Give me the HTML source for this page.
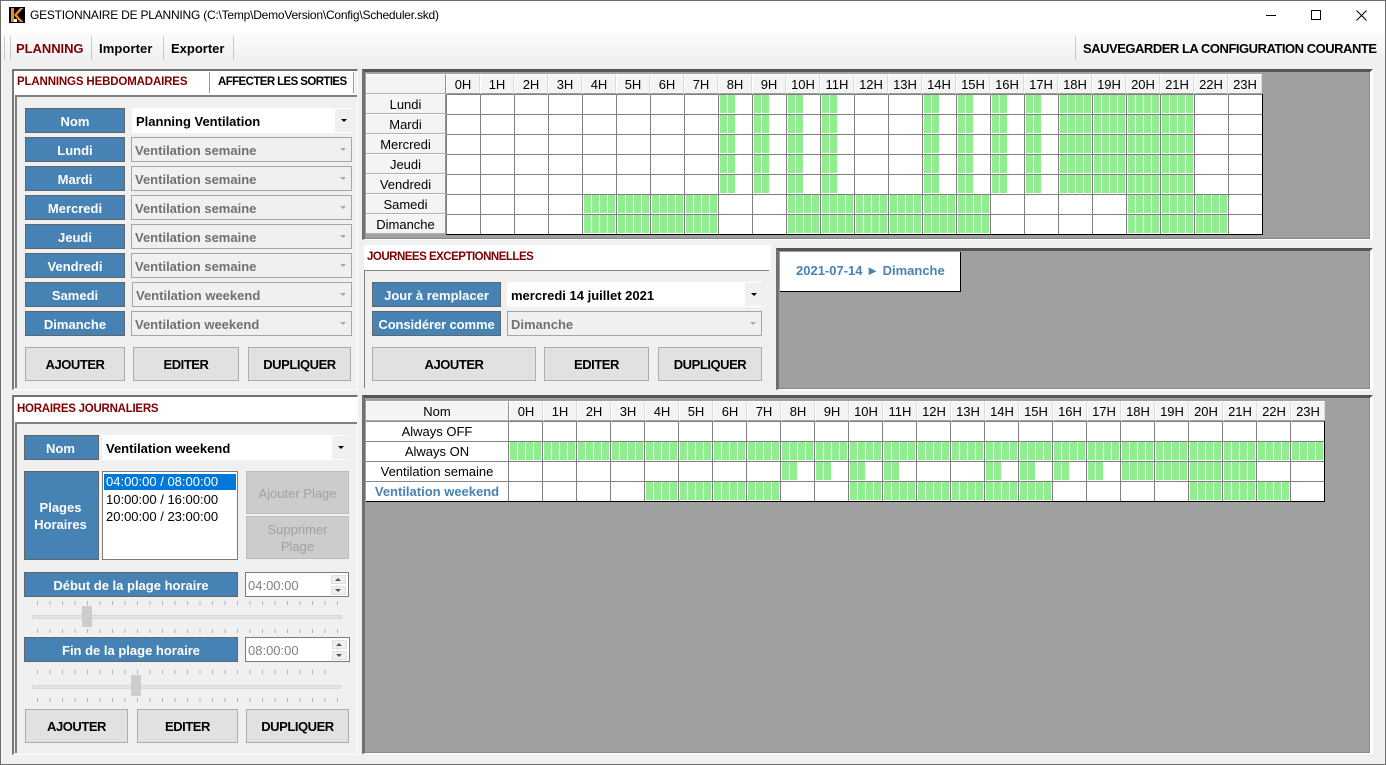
<!DOCTYPE html>
<html><head><meta charset="utf-8"><title>Planning</title>
<style>
html,body{margin:0;padding:0;background:#f0f0f0}
#w{position:relative;width:1386px;height:765px;overflow:hidden;background:#f0f0f0;font-family:"Liberation Sans",sans-serif;font-size:13px;color:#000}
#w div{position:absolute;box-sizing:border-box}
.lb{background:#4682b4;border:1px solid #5f666c;color:#fff;font-weight:bold;text-align:center;line-height:25px;left:25px;width:100px;height:25px;white-space:nowrap}
.cb{left:131px;width:221px;height:25px;background:#f0f0f0;border:1px solid #a6a6a6;color:#707070;font-weight:bold;line-height:25px;padding-left:3px}
.cb:after{content:"";position:absolute;right:5px;top:10px;border:3px solid transparent;border-top:3px solid #a8a8a8;border-bottom:0}
.ca{background:#fff;height:25px;font-weight:bold;line-height:27px;padding-left:4px;color:#000}
.ca i{position:absolute;right:0;top:1px;bottom:1px;width:17px;background:#f0f0f0}
.ca i:after{content:"";position:absolute;left:6px;top:10px;border:3px solid transparent;border-top:3px solid #000;border-bottom:0}
.bt{background:#e1e1e1;border:1px solid #adadad;font-weight:bold;font-size:13px;letter-spacing:-.45px;text-align:center;line-height:33px;height:34px;top:347px}
.hd{background:#fff}
.rd{color:#7f0000;font-weight:bold;font-size:11.5px}
.fr{background:#a0a0a0;border-top:3px solid #555;border-left:3px solid #707070;border-right:3px solid #fff;border-bottom:1px solid #fff;box-shadow:inset -1px -1px 0 #8a8a8a}
.hr{display:flex;height:20px;background:#f4f4f4}
.hr span{display:block;width:34px;border-left:1px solid #fff;border-right:1px solid #dcdcdc;border-top:1px solid #fff;border-bottom:1px solid #a0a0a0;text-align:center;line-height:19px;background:#f4f4f4;box-sizing:border-box;height:20px}
.rh{left:366px;width:80px;height:20px;background:#f4f4f4;border-top:1px solid #fff;border-bottom:1px solid #b0b0b0;border-right:1px solid #909090;text-align:center;line-height:19px}
.rn{left:366px;width:142px;height:20px;background:#fff;border-top:1px solid #888;text-align:center;line-height:19px}
.gd{background:#fff;overflow:hidden;border-right:1px solid #000;border-bottom:1px solid #000}
.g{background:linear-gradient(90deg,transparent 2px,#90ee90 2px,#90ee90 9px,transparent 9px,transparent 10px,#90ee90 10px,#90ee90 17px,transparent 17px,transparent 18px,#90ee90 18px,#90ee90 25px,transparent 25px,transparent 26px,#90ee90 26px,#90ee90 33px,transparent 33px) 0 0/34px 100%}
.ov{left:0;top:0;right:0;bottom:0;background:linear-gradient(90deg,#808080 1px,transparent 1px) 0 0/34px 100%,linear-gradient(180deg,#808080 1px,transparent 1px,transparent 19px,#fff 19px) 0 0/100% 20px}
.sep{width:1px;background:#c8c8c8;top:36px;height:24px}
.ds{background:#cccccc;border:1px solid #bdbdbd;color:#a2a2a2;text-align:center;left:246px;width:103px}
.tk{left:37px;width:301px;height:4px;background:linear-gradient(90deg,#b4b4b4 1px,transparent 1px) 0 0/12.5px 100%}
.tr{left:32px;height:4px;background:#e3e3e3;border:1px solid #d8d8d8}
.th{width:10px;height:21px;background:#cdcdcd}
.sp{left:245px;width:104px;height:25px;background:#fff;border:1px solid #7a7a7a;color:#808080;line-height:25px;padding-left:2px}
.sb{width:15px;height:9px;background:#efefef;border:1px solid #e0e0e0}
.up:after,.dn:after{content:"";position:absolute;left:3px;top:2px;border:3px solid transparent}
.up:after{border-bottom:3px solid #555;border-top:0}
.dn:after{border-top:3px solid #555;border-bottom:0}
</style></head><body>
<div id="w">
<!-- title -->
<div style="left:0;top:0;width:1386px;height:31px;background:#fff"></div>
<div style="left:0;top:31px;width:1386px;height:31px;background:linear-gradient(#fdfdfd,#f0f0f0)"></div>
<div style="left:9px;top:7px;width:16px;height:16px;background:#000;overflow:hidden">
<svg width="16" height="16" viewBox="0 0 16 16" style="display:block"><path d="M2 1h3v14H2zM5 8L11 1h3.5L8 8l6.5 7H11z" fill="#f08a1d"/><rect x="5" y="12" width="3" height="3" fill="#fff"/></svg></div>
<div style="left:30px;top:8px;font-size:12px;line-height:15px;white-space:nowrap;letter-spacing:-.22px">GESTIONNAIRE DE PLANNING (C:\Temp\DemoVersion\Config\Scheduler.skd)</div>
<div style="left:1266px;top:15px;width:10px;height:1px;background:#000"></div>
<div style="left:1311px;top:10px;width:10px;height:10px;border:1px solid #000"></div>
<svg style="position:absolute;left:1356px;top:10px" width="11" height="11" viewBox="0 0 11 11"><path d="M.5.5l10 10M10.5.5l-10 10" stroke="#000" stroke-width="1" fill="none"/></svg>
<!-- toolbar -->
<div class="sep" style="left:4px"></div><div class="sep" style="left:10px"></div>
<div class="sep" style="left:91px"></div><div class="sep" style="left:163px"></div><div class="sep" style="left:233px"></div><div class="sep" style="left:1075px"></div>
<div style="left:16px;top:41px;font-weight:bold;font-size:13px;color:#7f0000;line-height:16px;white-space:nowrap;letter-spacing:-.05px">PLANNING</div>
<div style="left:99px;top:41px;font-weight:bold;line-height:16px;letter-spacing:.1px">Importer</div>
<div style="left:171px;top:41px;font-weight:bold;line-height:16px">Exporter</div>
<div style="left:1083px;top:41px;font-weight:bold;line-height:16px;white-space:nowrap;letter-spacing:-.48px">SAUVEGARDER LA CONFIGURATION COURANTE</div>

<!-- left weekly panel -->
<div style="left:12px;top:69px;width:346px;height:321px;border-top:2px solid #707070;border-left:2px solid #777;border-bottom:1px solid #fff;border-right:1px solid #fff"></div>
<div class="hd" style="left:14px;top:71px;width:341px;height:24px"></div>
<div style="left:209px;top:72px;width:1px;height:21px;background:#999"></div>
<div style="left:353px;top:72px;width:1px;height:21px;background:#999"></div>
<div style="left:15px;top:95px;width:342px;height:2px;background:#808080"></div>
<div style="left:15px;top:95px;width:2px;height:293px;background:#808080"></div>
<div class="rd" style="left:17px;top:75px;line-height:15px;white-space:nowrap;letter-spacing:-.15px">PLANNINGS HEBDOMADAIRES</div>
<div style="left:218px;top:75px;line-height:15px;font-weight:bold;font-size:11.5px;white-space:nowrap;letter-spacing:-.6px">AFFECTER LES SORTIES</div>
<div class="lb" style="top:108px">Nom</div><div class="ca" style="left:132px;top:108px;width:220px">Planning Ventilation<i></i></div>
<div class="lb" style="top:137px">Lundi</div><div class="cb" style="top:137px">Ventilation semaine</div>
<div class="lb" style="top:166px">Mardi</div><div class="cb" style="top:166px">Ventilation semaine</div>
<div class="lb" style="top:195px">Mercredi</div><div class="cb" style="top:195px">Ventilation semaine</div>
<div class="lb" style="top:224px">Jeudi</div><div class="cb" style="top:224px">Ventilation semaine</div>
<div class="lb" style="top:253px">Vendredi</div><div class="cb" style="top:253px">Ventilation semaine</div>
<div class="lb" style="top:282px">Samedi</div><div class="cb" style="top:282px;left:132px;width:220px">Ventilation weekend</div>
<div class="lb" style="top:311px">Dimanche</div><div class="cb" style="top:311px">Ventilation weekend</div>
<div class="bt" style="left:25px;width:100px">AJOUTER</div>
<div class="bt" style="left:133px;width:106px">EDITER</div>
<div class="bt" style="left:248px;width:103px">DUPLIQUER</div>

<!-- weekly grid frame -->
<div class="fr" style="left:362px;top:69px;width:1011px;height:171px"></div>
<div class="hr" style="left:446px;top:74px;width:816px"><span>0H</span><span>1H</span><span>2H</span><span>3H</span><span>4H</span><span>5H</span><span>6H</span><span>7H</span><span>8H</span><span>9H</span><span>10H</span><span>11H</span><span>12H</span><span>13H</span><span>14H</span><span>15H</span><span>16H</span><span>17H</span><span>18H</span><span>19H</span><span>20H</span><span>21H</span><span>22H</span><span>23H</span></div>
<div class="rh" style="top:74px"></div>
<div class="rh" style="top:94px">Lundi</div><div class="rh" style="top:114px">Mardi</div><div class="rh" style="top:134px">Mercredi</div><div class="rh" style="top:154px">Jeudi</div><div class="rh" style="top:174px">Vendredi</div><div class="rh" style="top:194px">Samedi</div><div class="rh" style="top:214px">Dimanche</div>
<div class="gd" style="left:446px;top:94px;width:817px;height:141px">
<div class="g" style="left:272px;top:0;width:18px;height:100px"></div>
<div class="g" style="left:306px;top:0;width:18px;height:100px"></div>
<div class="g" style="left:340px;top:0;width:18px;height:100px"></div>
<div class="g" style="left:374px;top:0;width:18px;height:100px"></div>
<div class="g" style="left:476px;top:0;width:18px;height:100px"></div>
<div class="g" style="left:510px;top:0;width:18px;height:100px"></div>
<div class="g" style="left:544px;top:0;width:18px;height:100px"></div>
<div class="g" style="left:578px;top:0;width:18px;height:100px"></div>
<div class="g" style="left:612px;top:0;width:136px;height:100px"></div>
<div class="g" style="left:136px;top:100px;width:136px;height:40px"></div>
<div class="g" style="left:340px;top:100px;width:204px;height:40px"></div>
<div class="g" style="left:680px;top:100px;width:102px;height:40px"></div>
<div class="ov"></div>
</div>

<!-- exceptional -->
<div class="hd" style="left:364px;top:245px;width:407px;height:25px"></div>
<div style="left:364px;top:270px;width:405px;height:1px;background:#808080"></div>
<div style="left:364px;top:270px;width:1px;height:118px;background:#808080"></div>
<div class="rd" style="left:367px;top:250px;line-height:15px;white-space:nowrap;letter-spacing:-.5px">JOURNEES EXCEPTIONNELLES</div>
<div class="lb" style="left:372px;top:282px;width:129px">Jour à remplacer</div>
<div class="ca" style="left:507px;top:282px;width:255px">mercredi 14 juillet 2021<i></i></div>
<div class="lb" style="left:372px;top:311px;width:129px;letter-spacing:-.1px">Considérer comme</div>
<div class="cb" style="left:507px;top:311px;width:255px">Dimanche</div>
<div class="bt" style="left:372px;width:164px">AJOUTER</div>
<div class="bt" style="left:544px;width:105px">EDITER</div>
<div class="bt" style="left:658px;width:104px">DUPLIQUER</div>
<div class="fr" style="left:776px;top:248px;width:597px;height:142px"></div>
<div style="left:780px;top:252px;width:181px;height:40px;background:#fff;border-right:1px solid #000;border-bottom:1px solid #000;color:#4682b4;font-weight:bold;font-size:13px;line-height:38px;padding-left:16px;white-space:nowrap">2021-07-14 ► Dimanche</div>

<!-- daily panel -->
<div style="left:12px;top:395px;width:346px;height:360px;border-top:2px solid #707070;border-left:2px solid #777;border-bottom:1px solid #fff;border-right:1px solid #fff"></div>
<div class="hd" style="left:14px;top:397px;width:343px;height:25px"></div>
<div style="left:15px;top:422px;width:342px;height:2px;background:#808080"></div>
<div style="left:15px;top:422px;width:2px;height:331px;background:#808080"></div>
<div class="rd" style="left:17px;top:402px;line-height:15px;white-space:nowrap;letter-spacing:-.25px">HORAIRES JOURNALIERS</div>
<div class="lb" style="left:24px;top:435px;width:75px;padding-right:2px">Nom</div>
<div class="ca" style="left:102px;top:435px;width:247px">Ventilation weekend<i></i></div>
<div class="lb" style="left:24px;top:471px;width:75px;height:89px;line-height:17px;padding:27px 2px 0 0">Plages<br>Horaires</div>
<div style="left:102px;top:471px;width:136px;height:89px;background:#fff;border:1px solid #7a7a7a"></div>
<div style="left:104px;top:474px;width:132px;height:16px;background:#0078d7;color:#fff;line-height:16px;padding-left:2px">04:00:00 / 08:00:00</div>
<div style="left:106px;top:492px;line-height:16px">10:00:00 / 16:00:00</div>
<div style="left:106px;top:509px;line-height:16px">20:00:00 / 23:00:00</div>
<div class="ds" style="top:471px;height:43px;line-height:43px">Ajouter Plage</div>
<div class="ds" style="top:516px;height:43px;line-height:17px;padding-top:4px">Supprimer<br>Plage</div>
<div class="lb" style="left:24px;top:572px;width:214px">Début de la plage horaire</div>
<div class="sp" style="top:572px">04:00:00</div>
<div class="sb up" style="left:331px;top:575px"></div><div class="sb dn" style="left:331px;top:586px"></div>
<div class="tk" style="top:601px"></div><div class="tk" style="top:629px"></div>
<div class="tr" style="top:615px;width:310px"></div><div class="th" style="left:82px;top:606px"></div>
<div class="lb" style="left:24px;top:637px;width:214px">Fin de la plage horaire</div>
<div class="sp" style="top:637px;width:105px">08:00:00</div>
<div class="sb up" style="left:332px;top:640px"></div><div class="sb dn" style="left:332px;top:651px"></div>
<div class="tk" style="top:670px;width:300px"></div><div class="tk" style="top:698px"></div>
<div class="tr" style="top:685px;width:309px"></div><div class="th" style="left:131px;top:675px"></div>
<div class="bt" style="left:25px;top:709px;width:103px">AJOUTER</div>
<div class="bt" style="left:137px;top:709px;width:101px">EDITER</div>
<div class="bt" style="left:246px;top:709px;width:103px">DUPLIQUER</div>

<!-- daily grid -->
<div class="fr" style="left:362px;top:395px;width:1011px;height:359px"></div>
<div class="hr" style="left:509px;top:401px;width:816px"><span>0H</span><span>1H</span><span>2H</span><span>3H</span><span>4H</span><span>5H</span><span>6H</span><span>7H</span><span>8H</span><span>9H</span><span>10H</span><span>11H</span><span>12H</span><span>13H</span><span>14H</span><span>15H</span><span>16H</span><span>17H</span><span>18H</span><span>19H</span><span>20H</span><span>21H</span><span>22H</span><span>23H</span></div>
<div class="rh" style="top:401px;width:143px">Nom</div>
<div class="rn" style="top:421px">Always OFF</div>
<div class="rn" style="top:441px">Always ON</div>
<div class="rn" style="top:461px">Ventilation semaine</div>
<div class="rn" style="top:481px;color:#4682b4;font-weight:bold">Ventilation weekend</div>
<div style="left:366px;top:501px;width:142px;height:1px;background:#000"></div>
<div class="gd" style="left:508px;top:421px;width:817px;height:81px">
<div class="g" style="left:0;top:20px;width:816px;height:20px"></div>
<div class="g" style="left:272px;top:40px;width:18px;height:20px"></div>
<div class="g" style="left:306px;top:40px;width:18px;height:20px"></div>
<div class="g" style="left:340px;top:40px;width:18px;height:20px"></div>
<div class="g" style="left:374px;top:40px;width:18px;height:20px"></div>
<div class="g" style="left:476px;top:40px;width:18px;height:20px"></div>
<div class="g" style="left:510px;top:40px;width:18px;height:20px"></div>
<div class="g" style="left:544px;top:40px;width:18px;height:20px"></div>
<div class="g" style="left:578px;top:40px;width:18px;height:20px"></div>
<div class="g" style="left:612px;top:40px;width:136px;height:20px"></div>
<div class="g" style="left:136px;top:60px;width:136px;height:20px"></div>
<div class="g" style="left:340px;top:60px;width:204px;height:20px"></div>
<div class="g" style="left:680px;top:60px;width:102px;height:20px"></div>
<div class="ov"></div>
</div>

<!-- window border -->
<div style="left:0;top:0;width:1386px;height:765px;border:1px solid #6e6e6e;pointer-events:none"></div>
</div>
</body></html>
